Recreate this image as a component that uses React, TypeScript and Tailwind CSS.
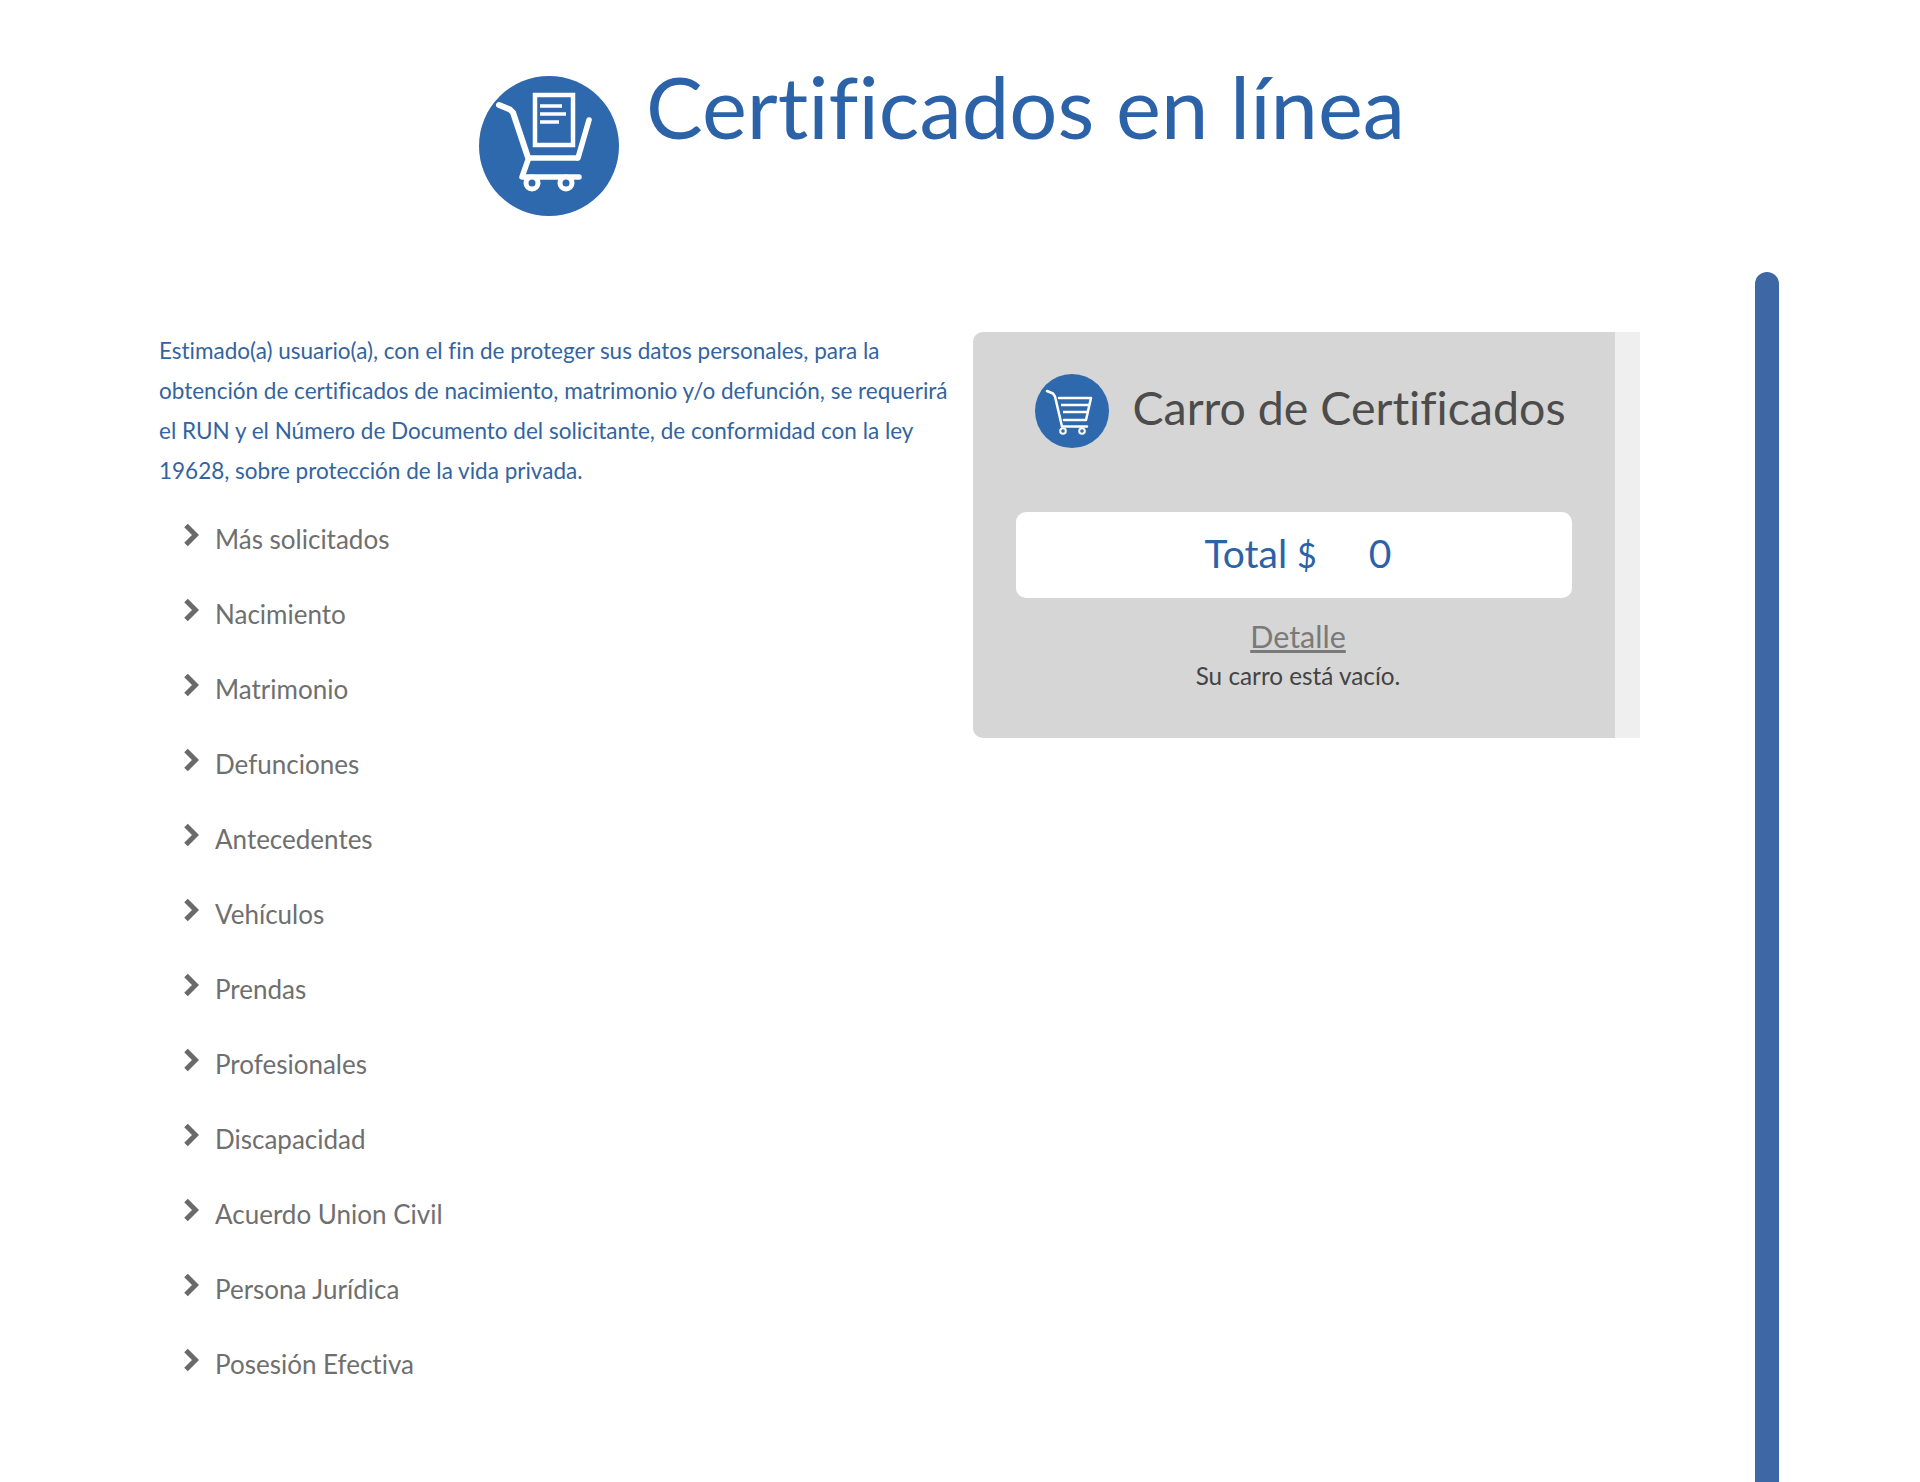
const categorias = [
  'Más solicitados',
  'Nacimiento',
  'Matrimonio',
  'Defunciones',
  'Antecedentes',
  'Vehículos',
  'Prendas',
  'Profesionales',
  'Discapacidad',
  'Acuerdo Union Civil',
  'Persona Jurídica',
  'Posesión Efectiva',
];

function HeaderIcon() {
  return (
    <svg viewBox="0 0 140 140" className="w-[140px] h-[140px] shrink-0">
      <circle cx="70" cy="70" r="70" fill="#2f69ad" />
      <g fill="none" stroke="#fff" strokeLinecap="round" strokeLinejoin="round">
        <path d="M20 29l11 4.500 3 3 15 45" strokeWidth="6" />
        <path d="M110 44l-11 38" strokeWidth="5.500" />
        <rect x="56" y="19" width="38" height="50" strokeWidth="4.500" strokeLinejoin="miter" />
        <path d="M61 30h22M61 38h26M61 46h19" strokeWidth="3.500" strokeLinecap="butt" />
        <path d="M48 82h51" strokeWidth="5.500" strokeLinecap="butt" />
        <path d="M49 84l-6 17h57" strokeWidth="5.500" />
        <circle cx="53" cy="107" r="6" strokeWidth="5" fill="#2f69ad" />
        <circle cx="87" cy="107" r="6" strokeWidth="5" fill="#2f69ad" />
      </g>
    </svg>
  );
}

function CartIcon() {
  return (
    <svg viewBox="0 0 74 74" className="w-[74px] h-[74px] shrink-0">
      <circle cx="37" cy="37" r="37" fill="#2f69ad" />
      <g fill="none" stroke="#fff" strokeLinecap="round" strokeLinejoin="round">
        <path d="M12 17l6 2.500 2 3 7 30h25" strokeWidth="2.500" />
        <path d="M24 24h32l-5 22H29" strokeWidth="2.500" />
        <path d="M26 31h28M28 38h24" strokeWidth="2.500" strokeLinecap="butt" />
        <circle cx="28" cy="57" r="2.800" strokeWidth="2" />
        <circle cx="47" cy="57" r="2.800" strokeWidth="2" />
      </g>
    </svg>
  );
}

function Chevron() {
  return (
    <svg viewBox="0 0 16 24" className="w-4 h-6 shrink-0">
      <path d="M3 2.500l9.500 9.500-9.500 9.500" fill="none" stroke="#6a6a6a" strokeWidth="5" strokeLinejoin="miter" />
    </svg>
  );
}

export default function App() {
  return (
    <div className="h-[1482px] w-full overflow-hidden bg-white font-['Lato','Noto_Sans',sans-serif] [font-variant-ligatures:none]">
      <header className="flex h-[272px] gap-[27px] pl-[479px] pt-[76px]">
        <HeaderIcon />
        <h1 className="-mt-[25px] whitespace-nowrap text-[85px] leading-[110px] font-normal text-[#2b62a8]">Certificados en línea</h1>
      </header>

      <main className="flex h-[1210px]">
        <section className="w-[973px] shrink-0 pl-[159px] pt-[59px]">
          <p className="whitespace-nowrap text-[22.500px] leading-[40px] text-[#33649f]">
            Estimado(a) usuario(a), con el fin de proteger sus datos personales, para la
            <br />
            obtención de certificados de nacimiento, matrimonio y/o defunción, se requerirá
            <br />
            el RUN y el Número de Documento del solicitante, de conformidad con la ley
            <br />
            19628, sobre protección de la vida privada.
          </p>
          <ul className="mt-[17px] pl-[24px]">
            {categorias.map((c) => (
              <li key={c} className="flex h-[75px] gap-[16px] pt-[15px] text-[26px] leading-[36px] text-[#6f6f6f]">
                <Chevron />
                <span className="-mt-[2px]">{c}</span>
              </li>
            ))}
          </ul>
        </section>

        <aside className="mt-[60px] flex h-[406px] w-[667px] shrink-0 overflow-hidden rounded-l-[10px] bg-[#efefef]">
          <div className="flex w-[642px] flex-col items-center bg-[#d6d6d6] pt-[42px]">
            <div className="flex h-[74px] items-center gap-[23px] pl-[13px]">
              <CartIcon />
              <h2 className="-mt-[8px] whitespace-nowrap text-[46.500px] leading-[60px] text-[#4c4c4c]">Carro de Certificados</h2>
            </div>
            <div className="mt-[64px] flex h-[86px] w-[556px] items-center justify-center gap-[52px] rounded-[10px] bg-white pb-[4px] pl-[8px] text-[39px] text-[#2b62a8]">
              <span>
                Total <span className="text-[34px]">$</span>
              </span>
              <span>0</span>
            </div>
            <a className="mt-[18px] pl-[8px] text-[30.500px] leading-[40px] text-[#7a7a7a] underline">Detalle</a>
            <p className="mt-[2px] pl-[8px] text-[24.300px] leading-[36px] text-[#444444]">Su carro está vacío.</p>
          </div>
        </aside>

        <div className="ml-[115px] w-[24px] rounded-t-[12px] bg-[#3e68a5]" />
      </main>
    </div>
  );
}
